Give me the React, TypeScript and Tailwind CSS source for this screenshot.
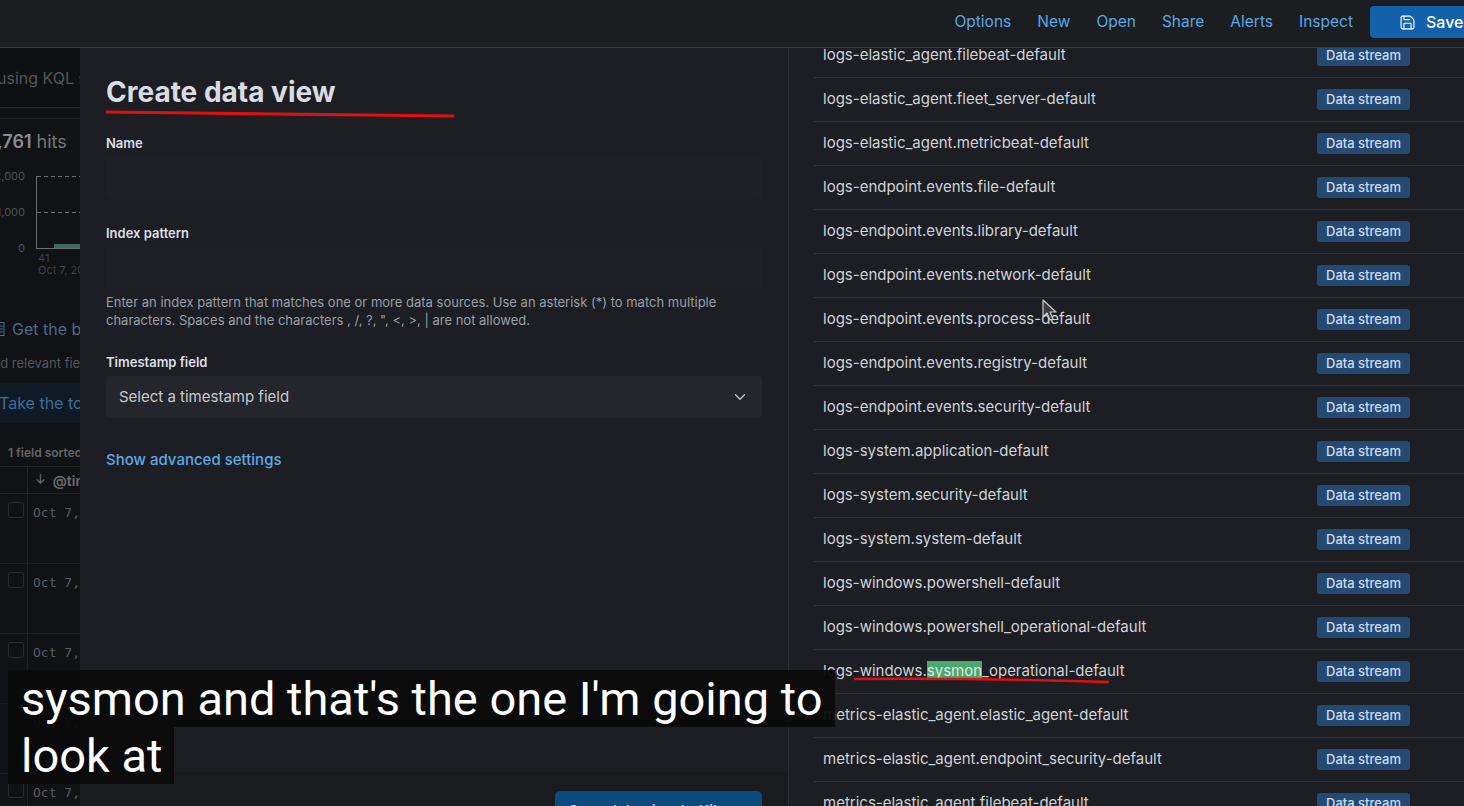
import { Save, ChevronDown } from "lucide-react";

const rows = [
  "logs-elastic_agent.filebeat-default",
  "logs-elastic_agent.fleet_server-default",
  "logs-elastic_agent.metricbeat-default",
  "logs-endpoint.events.file-default",
  "logs-endpoint.events.library-default",
  "logs-endpoint.events.network-default",
  "logs-endpoint.events.process-default",
  "logs-endpoint.events.registry-default",
  "logs-endpoint.events.security-default",
  "logs-system.application-default",
  "logs-system.security-default",
  "logs-system.system-default",
  "logs-windows.powershell-default",
  "logs-windows.powershell_operational-default",
  "logs-windows.sysmon_operational-default",
  "metrics-elastic_agent.elastic_agent-default",
  "metrics-elastic_agent.endpoint_security-default",
  "metrics-elastic_agent.filebeat-default",
];

function RowName({ name }: { name: string }) {
  if (name.includes("sysmon")) {
    return (
      <span>
        logs-windows.<span className="bg-[#4aa86e] text-[#dfe9e2]">sysmon</span>_operational-default
      </span>
    );
  }
  return <span>{name}</span>;
}

function LeftStrip() {
  return (
    <div className="flex w-[80px] shrink-0 flex-col overflow-hidden bg-[#111215] font-['Inter',sans-serif]">
      <div className="flex h-[60px] shrink-0 items-center border-b border-[#26272b] bg-[#0f1013]">
        <span className="-ml-[3px] whitespace-nowrap text-[16px] text-[#54565b]">using KQL syntax</span>
      </div>
      <div className="mt-[10px] shrink-0 border-t border-[#222327]" />
      <div className="mt-[10px] flex h-[24px] shrink-0 items-center whitespace-nowrap text-[18px]">
        <span className="-ml-[3px] font-semibold text-[#8b8d92]">,761</span>
        <span className="ml-[5px] text-[#76787d]">hits</span>
      </div>
      <svg width="80" height="110" className="mt-[18px] shrink-0" viewBox="0 0 80 110">
        <text x="25" y="9" textAnchor="end" fontSize="11" fill="#4e5055" fontFamily="Inter">2,000</text>
        <text x="25" y="45" textAnchor="end" fontSize="11" fill="#4e5055" fontFamily="Inter">1,000</text>
        <text x="25" y="81" textAnchor="end" fontSize="11" fill="#4e5055" fontFamily="Inter">0</text>
        <line x1="36.5" y1="5" x2="36.5" y2="78" stroke="#6b6d72" strokeWidth="1" />
        <line x1="36" y1="77.5" x2="80" y2="77.5" stroke="#6b6d72" strokeWidth="1" />
        <line x1="37" y1="5.5" x2="80" y2="5.5" stroke="#6b6d72" strokeWidth="1" strokeDasharray="4 3" />
        <line x1="37" y1="41.5" x2="80" y2="41.5" stroke="#6b6d72" strokeWidth="1" strokeDasharray="4 3" />
        <rect x="54" y="73" width="26" height="4" fill="#3d6b5a" />
        <text x="38" y="91" fontSize="11" fill="#3e4045" fontFamily="Inter">41</text>
        <text x="38" y="103" fontSize="11" fill="#3e4045" fontFamily="Inter">Oct 7, 2023</text>
      </svg>
      <div className="mt-[36px] flex h-[24px] shrink-0 items-center whitespace-nowrap">
        <svg width="5" height="16" viewBox="0 0 5 16" className="shrink-0">
          <rect x="-4" y="1.5" width="8" height="13" fill="none" stroke="#4b6a88" strokeWidth="1" />
          <line x1="0" y1="5" x2="3" y2="5" stroke="#4b6a88" />
          <line x1="0" y1="8" x2="3" y2="8" stroke="#4b6a88" />
          <line x1="0" y1="11" x2="3" y2="11" stroke="#4b6a88" />
        </svg>
        <span className="ml-[7px] text-[16px] text-[#49698a]">Get the best</span>
      </div>
      <div className="mt-[14px] flex h-[18px] shrink-0 items-center whitespace-nowrap">
        <span className="-ml-[3px] text-[13px] text-[#54565b]">ld relevant fields</span>
      </div>
      <div className="mt-[10px] flex h-[40px] shrink-0 items-center whitespace-nowrap bg-[#0e1a26]">
        <span className="-ml-[1px] text-[16px] text-[#3f6e96]">Take the tour</span>
      </div>
      <div className="mt-[21px] flex h-[18px] shrink-0 items-center whitespace-nowrap pl-[8px]">
        <span className="text-[12px] font-semibold text-[#626469]">1 field sorted</span>
      </div>
      <div className="mt-[4px] flex h-[28px] shrink-0 border-y border-[#222327]">
        <div className="w-[28px] shrink-0 border-r border-[#222327]" />
        <div className="flex items-center whitespace-nowrap pl-[7px] text-[14px] text-[#6a6c71]">
          <span className="text-[13px]">↓</span>
          <span className="ml-[7px] font-semibold">@timestamp</span>
        </div>
      </div>
      {[0, 1, 2, 3, 4].map((i) => (
        <div key={i} className="flex h-[70px] shrink-0 border-b border-[#1e1f23]">
          <div className="w-[28px] shrink-0 border-r border-[#1e1f23] pl-[8px] pt-[8px]">
            <div className="h-[16px] w-[16px] rounded-[3px] border border-[#2a2b30]" />
          </div>
          <div className="whitespace-nowrap pl-[5px] pt-[9px] font-['DejaVu_Sans_Mono',monospace] text-[13px] text-[#5a5c61]">
            Oct 7, 2023
          </div>
        </div>
      ))}
    </div>
  );
}

function FormColumn() {
  return (
    <div className="flex w-[709px] shrink-0 flex-col border-r border-[#2b2c31] bg-[#1d1e23]">
      <div className="flex flex-1 flex-col px-[26px] pt-[26px]">
        <h1 className="h-[36px] text-[28px] font-bold leading-[36px] text-[#d9dce1]">Create data view</h1>
        <label className="mt-[24px] h-[18px] text-[13px] font-semibold leading-[18px] text-[#dcdfe4]">Name</label>
        <div className="mt-[5px] h-[42px] rounded-[4px] bg-[#1f2025]" />
        <label className="mt-[25px] h-[18px] text-[13px] font-semibold leading-[18px] text-[#dcdfe4]">Index pattern</label>
        <div className="mt-[5px] h-[42px] rounded-[4px] bg-[#1f2025]" />
        <p className="mt-[4px] whitespace-nowrap text-[13px] leading-[18px] text-[#9a9ea6]">
          Enter an index pattern that matches one or more data sources. Use an asterisk (*) to match multiple
          <br />
          characters. Spaces and the characters , /, ?, ", &lt;, &gt;, | are not allowed.
        </p>
        <label className="mt-[24px] h-[18px] text-[13px] font-semibold leading-[18px] text-[#dcdfe4]">Timestamp field</label>
        <div className="mt-[5px] flex h-[42px] items-center justify-between rounded-[4px] bg-[#25262b] pl-[13px] pr-[13px]">
          <span className="text-[15px] text-[#c6c9ce]">Select a timestamp field</span>
          <ChevronDown size={18} strokeWidth={1.6} className="text-[#c6c9ce]" />
        </div>
        <div className="mt-[30px] h-[24px] text-[15px] font-medium leading-[24px] text-[#5ea9e6]">Show advanced settings</div>
      </div>
      <div className="flex h-[34px] shrink-0 items-start justify-between bg-[#1a1b1f] pl-[30px] pr-[26px] pt-[19px]">
        <span className="mt-[14px] text-[15px] font-medium text-[#5ea9e6]">✕ Close</span>
        <div className="flex h-[40px] w-[207px] items-start justify-center rounded-[5px] bg-[#0a4a7d] pt-[9px] text-[15px] font-medium text-[#c9d8e8]">
          Save data view to Kibana
        </div>
      </div>
    </div>
  );
}

function ListColumn() {
  return (
    <div className="flex-1 overflow-hidden bg-[#1d1e23] pl-[25px]">
      <ul className="-mt-[14px]">
        {rows.map((r) => (
          <li
            key={r}
            className="flex h-[44px] items-center justify-between border-b border-[#303136] pl-[9px] pr-[54px]"
          >
            <span className="whitespace-nowrap text-[15px] text-[#cfd2d7]">
              <RowName name={r} />
            </span>
            <span className="flex h-[21px] w-[93px] items-center justify-center rounded-[3px] bg-[#244a72] text-[13px] font-medium text-[#c9dcf0]">
              Data stream
            </span>
          </li>
        ))}
      </ul>
    </div>
  );
}

export default function App() {
  return (
    <div className="relative h-[806px] w-[1464px] overflow-hidden bg-[#1d1e23] font-['Inter',sans-serif]">
      <header className="relative z-10 flex h-[48px] items-center overflow-hidden border-b border-[#393a3f] bg-[#1c1d21] pb-[3px]">
        <nav className="ml-auto flex items-center gap-[26px] text-[15.5px] text-[#5aa8e8]">
          <span>Options</span>
          <span>New</span>
          <span>Open</span>
          <span>Share</span>
          <span>Alerts</span>
          <span>Inspect</span>
        </nav>
        <div className="-mr-[30px] ml-[17px] flex h-[32px] w-[124px] shrink-0 items-center rounded-[4px] bg-[#1360ad] pl-[29px] text-[16px] font-medium text-white">
          <Save size={17} strokeWidth={1.6} />
          <span className="ml-[10px]">Save</span>
        </div>
      </header>
      <div className="flex h-[758px]">
        <LeftStrip />
        <FormColumn />
        <ListColumn />
      </div>

      {/* red annotation under title */}
      <svg className="absolute left-[104px] top-[107px]" width="354" height="14" viewBox="0 0 354 14">
        <path d="M3 5 L349 9" stroke="#e0100f" strokeWidth="3" strokeLinecap="round" fill="none" />
      </svg>
      {/* red annotation under sysmon row */}
      <svg className="absolute left-[852px] top-[674px]" width="260" height="14" viewBox="0 0 260 14">
        <path d="M3 5 Q 130 4 256 8" stroke="#e0100f" strokeWidth="2.5" strokeLinecap="round" fill="none" />
      </svg>
      {/* mouse cursor */}
      <svg className="absolute left-[1042px] top-[299px]" width="16" height="24" viewBox="0 0 16 24">
        <path d="M1 1 L1 18 L5 14 L8 21 L11 20 L8 13 L14 13 Z" fill="#3b3c40" stroke="#c9cacd" strokeWidth="1.2" strokeLinejoin="round" />
      </svg>
      {/* subtitles */}
      <div className="absolute left-[8px] top-[670px] flex flex-col items-start font-['Roboto',sans-serif] text-[47px] leading-[57px] text-white">
        <div className="h-[57px] whitespace-nowrap bg-[#0b0b0b]/95 pl-[13px] pr-[12px]">sysmon and that's the one I'm going to</div>
        <div className="h-[57px] whitespace-nowrap bg-[#0b0b0b]/95 pl-[13px] pr-[12px]">look at</div>
      </div>
    </div>
  );
}
